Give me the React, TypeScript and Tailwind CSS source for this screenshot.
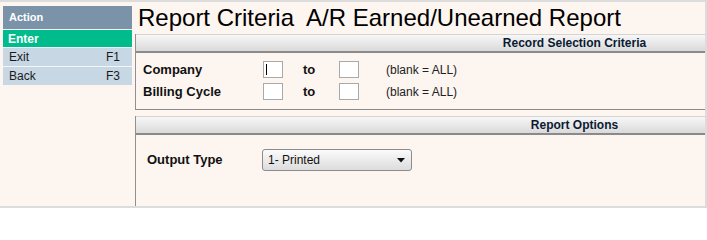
import React from "react";

const font = { fontFamily: '"Liberation Sans", Arial, sans-serif' };

function Row({ label, first }: { label: string; first?: boolean }) {
  return (
    <div className="flex items-center h-[17px]">
      <div className="w-[120px] text-[13px] font-bold text-[#111]">{label}</div>
      <div className="relative w-[20px] h-[17px] bg-white border border-[#a9a9a9]">
        {first && <div className="absolute left-[2px] top-[2px] w-px h-[11px] bg-black" />}
      </div>
      <div className="w-[56px] pl-[20px] text-[13px] font-bold text-[#111]">to</div>
      <div className="w-[20px] h-[17px] bg-white border border-[#a9a9a9]" />
      <div className="pl-[27px] text-[12px] text-[#222]">(blank = ALL)</div>
    </div>
  );
}

function Header({ title }: { title: string }) {
  return (
    <div className="h-[19px] border-t border-[#d4d4d4] border-b-2 border-b-[#8a8a8a] bg-gradient-to-b from-[#f7f7f7] to-[#dadada] flex items-center pl-[308px]">
      <div className="flex-1 text-center text-[12px] font-bold text-[#0b1a33] leading-none">{title}</div>
    </div>
  );
}

export default function App() {
  return (
    <div
      className="w-[707px] h-[208px] bg-[#fdf5ef] border-t-2 border-r-2 border-b-2 border-[#dcdcdc] flex overflow-hidden"
      style={font}
    >
      <div className="w-[129px] ml-[3px] mt-[4px] flex flex-col">
        <div className="h-[23px] bg-[#7a93a9] text-white text-[11px] font-bold pl-[6px] flex items-center">Action</div>
        <div className="h-px bg-[#eef2f5]" />
        <div className="h-[17px] bg-[#00bb8b] text-white text-[12px] font-bold pl-[5px] flex items-center">Enter</div>
        <div className="h-px bg-[#f2f6f9]" />
        <div className="h-[18px] bg-[#c8d7e4] text-[#1a1a1a] text-[12px] pl-[6px] pr-[12px] flex items-center justify-between">
          <span>Exit</span>
          <span>F1</span>
        </div>
        <div className="h-px bg-[#f2f6f9]" />
        <div className="h-[18px] bg-[#c8d7e4] text-[#1a1a1a] text-[12px] pl-[6px] pr-[12px] flex items-center justify-between">
          <span>Back</span>
          <span>F3</span>
        </div>
      </div>
      <div className="ml-[3px] w-[570px] flex flex-col">
        <div className="h-[33px] pl-[3px] text-[24px] leading-[33px] text-black whitespace-pre -mt-[1px]">
          {"Report Criteria  A/R Earned/Unearned Report"}
        </div>
        <div className="border-l border-[#8f8f8f] border-b border-b-[#8a8a8a] h-[76px] flex flex-col">
          <Header title="Record Selection Criteria" />
          <div className="pl-[7px] pt-[8px] flex flex-col gap-[5px]">
            <Row label="Company" first />
            <Row label="Billing Cycle" />
          </div>
        </div>
        <div className="mt-[6px] border-l border-[#8f8f8f] flex-1 flex flex-col">
          <Header title="Report Options" />
          <div className="pl-[11px] pt-[14px] flex items-center">
            <div className="w-[115px] text-[13px] font-bold text-[#111]">Output Type</div>
            <div className="w-[150px] h-[22px] rounded-[3px] border border-[#8c8c8c] bg-gradient-to-b from-[#fbfbfb] to-[#dcdcdc] flex items-center justify-between pl-[5px] pr-[6px]">
              <span className="text-[12px] text-[#111]">1- Printed</span>
              <svg width="8" height="5" viewBox="0 0 8 5">
                <path d="M0 0H8L4 4.5Z" fill="#111" />
              </svg>
            </div>
          </div>
        </div>
      </div>
    </div>
  );
}
